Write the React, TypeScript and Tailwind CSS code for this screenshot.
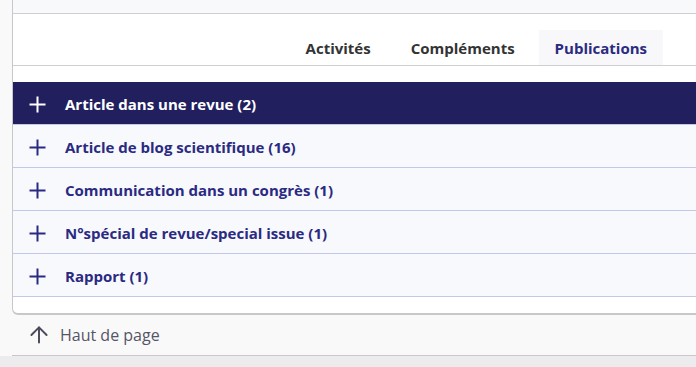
import { ArrowUp } from 'lucide-react'

const tabs = ['Activités', 'Compléments', 'Publications']

const rows = [
  'Article dans une revue (2)',
  'Article de blog scientifique (16)',
  'Communication dans un congrès (1)',
  'N°spécial de revue/special issue (1)',
  'Rapport (1)',
]

function PlusIcon() {
  return (
    <svg width="17" height="17" viewBox="0 0 17 17" fill="none" stroke="currentColor" strokeWidth="2">
      <path d="M8.5 0.5v16M0.5 8.5h16" />
    </svg>
  )
}

export default function App() {
  return (
    <div
      className="w-[696px] h-[367px] overflow-hidden bg-[#ececee]"
      style={{ fontFamily: '"Open Sans", "Noto Sans", sans-serif' }}
    >
      <div className="bg-[#f9f9f9] pl-[12px]">
        <div className="bg-white border-l border-b-2 border-[#c8c8cc] rounded-bl-md">
          <div className="h-[14px] bg-[#f8f9fb] border-b border-[#cfcfd3]" />
          <div className="h-[52px] flex items-end justify-end gap-2 pr-[33px] border-b border-[#cfcfd3]">
            {tabs.map((tab) => (
              <div
                key={tab}
                className={`h-[35px] px-4 pt-[1px] flex items-center text-[15px] font-bold ${
                  tab === 'Publications' ? 'bg-[#f8f8fa] text-[#2b2b80]' : 'text-[#333333]'
                }`}
              >
                {tab}
              </div>
            ))}
          </div>
          <div className="h-[16px]" />
          <div>
            {rows.map((row, i) => (
              <div
                key={row}
                className={`h-[43px] flex items-center pl-[16px] pt-[2px] border-b border-[#c3c7e9] ${
                  i === 0 ? 'bg-[#221f5f] text-white' : 'bg-[#f8f9fc] text-[#2a2a82]'
                }`}
              >
                <PlusIcon />
                <span className="ml-[19px] text-[15px] font-bold">{row}</span>
              </div>
            ))}
          </div>
          <div className="h-[16px]" />
        </div>
      </div>
      <div className="bg-[#f9f9f9] pl-[12px]">
        <div className="h-[41px] flex items-center pl-[14px] border-b border-[#c8c8cc] text-base text-[#555566]">
          <ArrowUp className="w-[26px] h-[26px] text-[#4a4a5a]" strokeWidth={1.8} />
          <span className="ml-[8px]">Haut de page</span>
        </div>
      </div>
    </div>
  )
}
